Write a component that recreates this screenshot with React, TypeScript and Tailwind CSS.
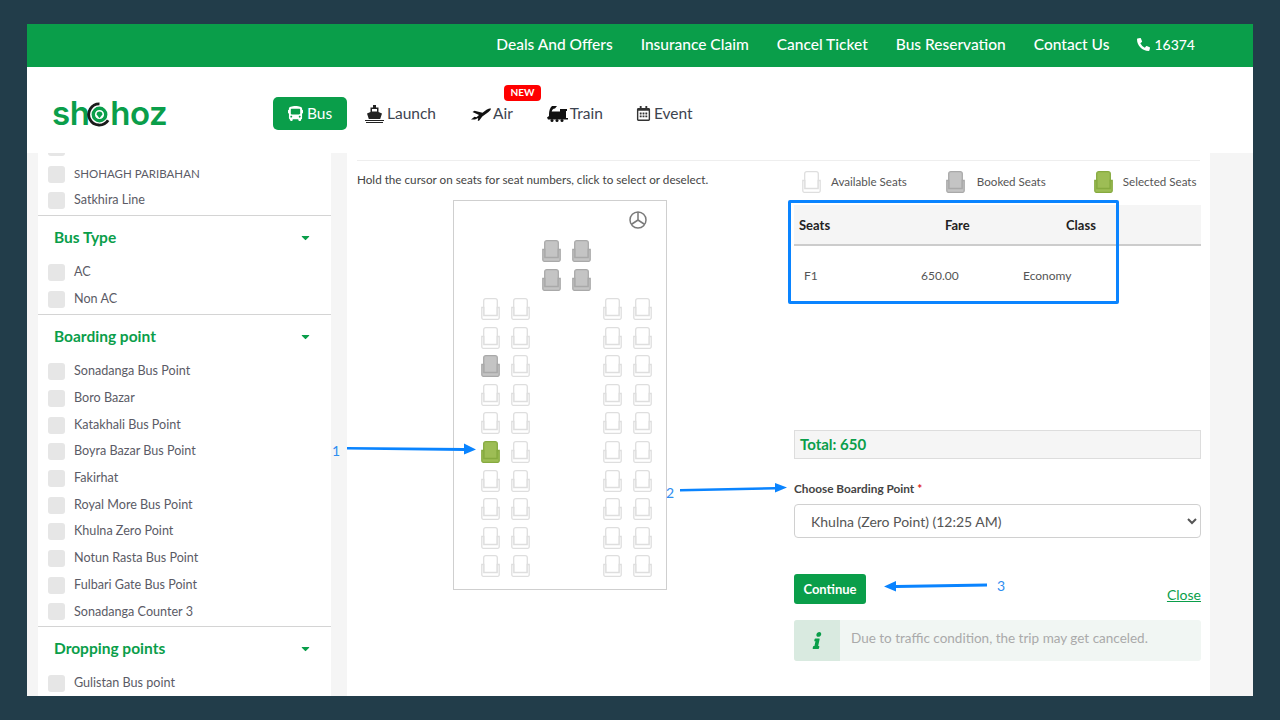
import React from "react";
import { FaBus, FaRegCalendarAlt, FaPhoneAlt, FaInfo, FaCaretDown } from "react-icons/fa";

const topLinks = ["Deals And Offers", "Insurance Claim", "Cancel Ticket", "Bus Reservation", "Contact Us"];

const Seat = ({ kind = "free", className = "" }: { kind?: "free" | "booked" | "picked"; className?: string }) => {
  const colors = {
    free: { fill: "#ffffff", line: "#dedede" },
    booked: { fill: "#c4c4c4", line: "#a9a9a9" },
    picked: { fill: "#9dbd55", line: "#86aa3f" },
  }[kind];
  return (
    <svg viewBox="0 0 19 22" className={`w-[19px] h-[22px] ${className}`} fill={colors.fill} stroke={colors.line} strokeWidth="1.3">
      <path d="M2.700 18V2.800A2.200 2.200 0 0 1 4.900.700h9.200a2.200 2.200 0 0 1 2.200 2.100V18z" />
      <path d="M.800 9.500h2v8h13.400v-8h2v10.300a1.500 1.500 0 0 1-1.500 1.500H2.300a1.500 1.500 0 0 1-1.500-1.500z" />
    </svg>
  );
};

const CheckRow = ({ label, size = "text-[12.6px]" }: { label: string; size?: string }) => (
  <div className="h-[26.7px] flex items-center pl-[10px] gap-[9px]">
    <span className="w-[17px] h-[17px] rounded-[3px] bg-[#e6e6e6] shrink-0" />
    <span className={`${size} text-[#5b5b66]`}>{label}</span>
  </div>
);

const FilterHead = ({ title, top = "mt-[1px]" }: { title: string; top?: string }) => (
  <div className={`h-[44px] pl-[16px] pr-[19px] flex items-center justify-between border-t border-[#d4d4d4] ${top}`}>
    <span className="font-bold text-[#0a9e4a] text-[15.500px]">{title}</span>
    <FaCaretDown className="text-[#0a9e4a] text-[13px]" />
  </div>
);

const Logo = () => (
  <div className="flex items-center text-[#0a9e4a] font-semibold text-[33px] leading-none tracking-[-0.5px] font-['Inter',sans-serif]">
    <span>sh</span>
    <svg viewBox="0 0 26 26" className="w-[25px] h-[25px] mx-[-2px] mt-[2px]">
      <path d="M13 2a11 11 0 1 0 9 17" fill="none" stroke="#1a1a1a" strokeWidth="3" />
      <circle cx="13" cy="13" r="6.500" fill="none" stroke="#0a9e4a" strokeWidth="3.500" />
      <path d="M13 10a3 3 0 0 1 3 3l-3 4-3-4a3 3 0 0 1 3-3z" fill="#0a9e4a" />
    </svg>
    <span>hoz</span>
  </div>
);

const ShipIcon = () => (
  <svg viewBox="0 0 19 18" className="w-[19px] h-[18px]" fill="#222">
    <path d="M8 0h3v2.500h2.500V7L17 8.500l-1.800 5.500H3.800L2 8.500 5.500 7V2.500H8z" />
    <path d="M7 4h5v2.500H7z" fill="#fff" />
    <path d="M0 15h19v1H0zM1 17h17v1H1z" />
  </svg>
);

const PlaneIcon = () => (
  <svg viewBox="0 0 20 14" className="w-[20px] h-[14px]" fill="#111">
    <path d="M0 12.500l3.500-2.700 2 .4L8 8 1.500 5l2-1.200 8 2 4-3C17 1.800 19 1.500 20 1.600c0 1-1 2.400-2.500 3.400l-6.200 4.400-3 4-1.500.6.4-3-3.200 1.500z" />
  </svg>
);

const TrainIcon = () => (
  <svg viewBox="0 0 21 16" className="w-[21px] h-[16px]" fill="#111">
    <path d="M5 0h5L8 2.500c-2 .3-3 1.400-3.300 3H13V3h7v2h-1v7h2v1.500H1l-1-2 2-1.500V8c0-3 1-6.500 3-8z" />
    <circle cx="5" cy="14.500" r="1.500" />
    <circle cx="10" cy="14.500" r="1.500" />
    <circle cx="15" cy="14.500" r="1.500" />
  </svg>
);

const Wheel = () => (
  <svg viewBox="0 0 18 18" className="w-[18px] h-[18px]" fill="none" stroke="#7a7a7a" strokeWidth="1.500">
    <circle cx="9" cy="9" r="8" />
    <path d="M9 1v8M9 9l-6.800 4.500M9 9l6.800 4.500" />
  </svg>
);

const SeatRow = ({ left = "free", picked = false }: { left?: "free" | "booked"; picked?: boolean }) => (
  <div className="flex h-[22px] pl-[27px]">
    <Seat kind={picked ? "picked" : left} />
    <Seat className="ml-[11px]" />
    <Seat className="ml-[73px]" />
    <Seat className="ml-[11px]" />
  </div>
);

export default function App() {
  return (
    <div className="relative w-[1280px] h-[720px] bg-[#223d4a] px-[27px] py-[24px] font-['Lato',sans-serif] overflow-hidden">
      <div className="w-full h-full flex flex-col overflow-hidden bg-[#f5f5f5]">
        {/* Top bar */}
        <div className="h-[43px] shrink-0 bg-[#0a9e4a] flex items-center justify-end gap-[28px] pr-[58px] pb-[2px] text-white text-[15.500px] font-medium">
          {topLinks.map((t) => (
            <span key={t}>{t}</span>
          ))}
          <span className="flex items-center gap-[4px] text-[14px]">
            <FaPhoneAlt className="text-[13px]" />
            16374
          </span>
        </div>

        {/* Header */}
        <div className="h-[86px] shrink-0 bg-white flex items-center pl-[25px] pt-[7px]">
          <div className="w-[221px]">
            <Logo />
          </div>
          <div className="flex items-center text-[15.500px] text-[#3d4450]">
            <div className="w-[74px] h-[33px] rounded-[5px] bg-[#0a9e4a] text-white flex items-center justify-center gap-[4px]">
              <FaBus className="text-[15px]" />
              Bus
            </div>
            <div className="flex items-center gap-[3px] ml-[18px]">
              <ShipIcon />
              Launch
            </div>
            <div className="relative flex items-center gap-[2px] ml-[35px]">
              <PlaneIcon />
              Air
              <span className="absolute left-[33px] top-[-17px] w-[37px] h-[16px] rounded-[4px] bg-[#ff0000] text-white text-[10px] font-bold flex items-center justify-center">
                NEW
              </span>
            </div>
            <div className="flex items-center gap-[2px] ml-[34px]">
              <TrainIcon />
              Train
            </div>
            <div className="flex items-center gap-[3px] ml-[33px]">
              <FaRegCalendarAlt className="text-[#333] text-[15px]" />
              Event
            </div>
          </div>
        </div>

        {/* Body */}
        <div className="flex-1 min-h-0 flex pl-[11px]">
          {/* Sidebar */}
          <div className="w-[293px] shrink-0 bg-white overflow-hidden">
            <div className="-mt-[19px]">
              <CheckRow label="" />
              <CheckRow label="SHOHAGH PARIBAHAN" size="text-[11.500px]" />
              <CheckRow label="Satkhira Line" />
              <FilterHead title="Bus Type" />
              <CheckRow label="AC" />
              <CheckRow label="Non AC" />
              <FilterHead title="Boarding point" top="mt-[2px]" />
              {[
                "Sonadanga Bus Point",
                "Boro Bazar",
                "Katakhali Bus Point",
                "Boyra Bazar Bus Point",
                "Fakirhat",
                "Royal More Bus Point",
                "Khulna Zero Point",
                "Notun Rasta Bus Point",
                "Fulbari Gate Bus Point",
                "Sonadanga Counter 3",
              ].map((s) => (
                <CheckRow key={s} label={s} />
              ))}
              <FilterHead title="Dropping points" />
              <CheckRow label="Gulistan Bus point" />
            </div>
          </div>

          {/* Main */}
          <div className="w-[863px] ml-[16px] bg-white px-[10px] pt-[7px]">
            <div className="border-t border-[#eeeeee] flex">
              <div className="w-[437px] shrink-0">
                <p className="text-[11.700px] text-[#444] h-[39px] pt-[10px]">
                  Hold the cursor on seats for seat numbers, click to select or deselect.
                </p>
                <div className="ml-[96px] w-[214px] h-[390px] border border-[#cfcfcf]">
                  <div className="flex justify-end pt-[10px] pr-[19px] h-[39px]">
                    <Wheel />
                  </div>
                  <div className="flex flex-col gap-[7px] pl-[88px]">
                    {[0, 1].map((r) => (
                      <div key={r} className="flex gap-[11px]">
                        <Seat kind="booked" />
                        <Seat kind="booked" />
                      </div>
                    ))}
                  </div>
                  <div className="flex flex-col gap-[6.600px] mt-[7px]">
                    {Array.from({ length: 10 }).map((_, r) => (
                      <SeatRow key={r} left={r === 2 ? "booked" : "free"} picked={r === 5} />
                    ))}
                  </div>
                </div>
              </div>

              <div className="w-[407px] shrink-0">
                <div className="h-[44px] flex items-center pl-[8px] pb-[2px] text-[11.600px] text-[#555]">
                  <Seat />
                  <span className="ml-[10px]">Available Seats</span>
                  <Seat kind="booked" className="ml-[39px]" />
                  <span className="ml-[12px]">Booked Seats</span>
                  <Seat kind="picked" className="ml-[48px]" />
                  <span className="ml-[10px]">Selected Seats</span>
                </div>
                <div className="h-[41px] bg-[#f5f5f5] border-b-2 border-[#cccccc] flex items-center pl-[5px] pt-[2px] text-[13px] font-bold text-[#222]">
                  <span className="w-[146px]">Seats</span>
                  <span className="w-[121px]">Fare</span>
                  <span>Class</span>
                </div>
                <div className="h-[60px] flex items-center pl-[10px] text-[12px] text-[#555]">
                  <span className="w-[117px]">F1</span>
                  <span className="w-[102px]">650.00</span>
                  <span>Economy</span>
                </div>
                <div className="mt-[124px] h-[29px] bg-[#f5f5f5] border border-[#dddddd] flex items-center pl-[5px] text-[15px] font-bold text-[#0a9e4a]">
                  Total: 650
                </div>
                <div className="mt-[21px] text-[11.800px] font-bold text-[#444] h-[18px]">
                  Choose Boarding Point <span className="text-[#e02020]">*</span>
                </div>
                <select className="mt-[6px] w-full h-[34px] rounded-[4px] border border-[#d0d0d0] bg-white pl-[12px] text-[14px] text-[#555]">
                  <option>Khulna (Zero Point) (12:25 AM)</option>
                </select>
                <div className="mt-[36px] flex items-end justify-between">
                  <div className="w-[72px] h-[30px] rounded-[3px] bg-[#0a9e4a] text-white text-[13px] font-bold flex items-center justify-center pt-[1px]">
                    Continue
                  </div>
                  <span className="text-[14px] text-[#0a9e4a] underline leading-[19px]">Close</span>
                </div>
                <div className="mt-[16px] h-[41px] rounded-[3px] bg-[#f1f6f3] flex items-center text-[13.500px] text-[#aaaaaa] overflow-hidden">
                  <div className="w-[46px] h-full bg-[#d9eae0] flex items-center justify-center mr-[11px]">
                    <FaInfo className="text-[#0a9e4a] text-[17px] -skew-x-12" />
                  </div>
                  <span className="pb-[4px]">Due to traffic condition, the trip may get canceled.</span>
                </div>
              </div>
            </div>
          </div>
        </div>
      </div>

      {/* Tutorial annotations on top of the screenshot */}
      <div className="absolute left-[788px] top-[200px] w-[331px] h-[104px] border-[3px] border-[#0a84ff] rounded-[2px]" />
      <svg className="absolute inset-0 w-[1280px] h-[720px] pointer-events-none" viewBox="0 0 1280 720" fill="#0a84ff" stroke="none">
        <path d="M347 447l117 1v-4.500l12 6-12 5v-3.500l-117-1.500z" />
        <path d="M680 489l95-2v-4l12 4.500-12 5v-3l-95 2z" />
        <path d="M987 583.500l-91 1.500v-4l-12 5.500 12 5v-3.500l91-1.500z" />
      </svg>
      <span className="absolute left-[332px] top-[440px] text-[14px] text-[#2f8ef0]">1</span>
      <span className="absolute left-[666px] top-[482px] text-[14px] text-[#2f8ef0]">2</span>
      <span className="absolute left-[997px] top-[575px] text-[14px] text-[#2f8ef0]">3</span>
    </div>
  );
}
